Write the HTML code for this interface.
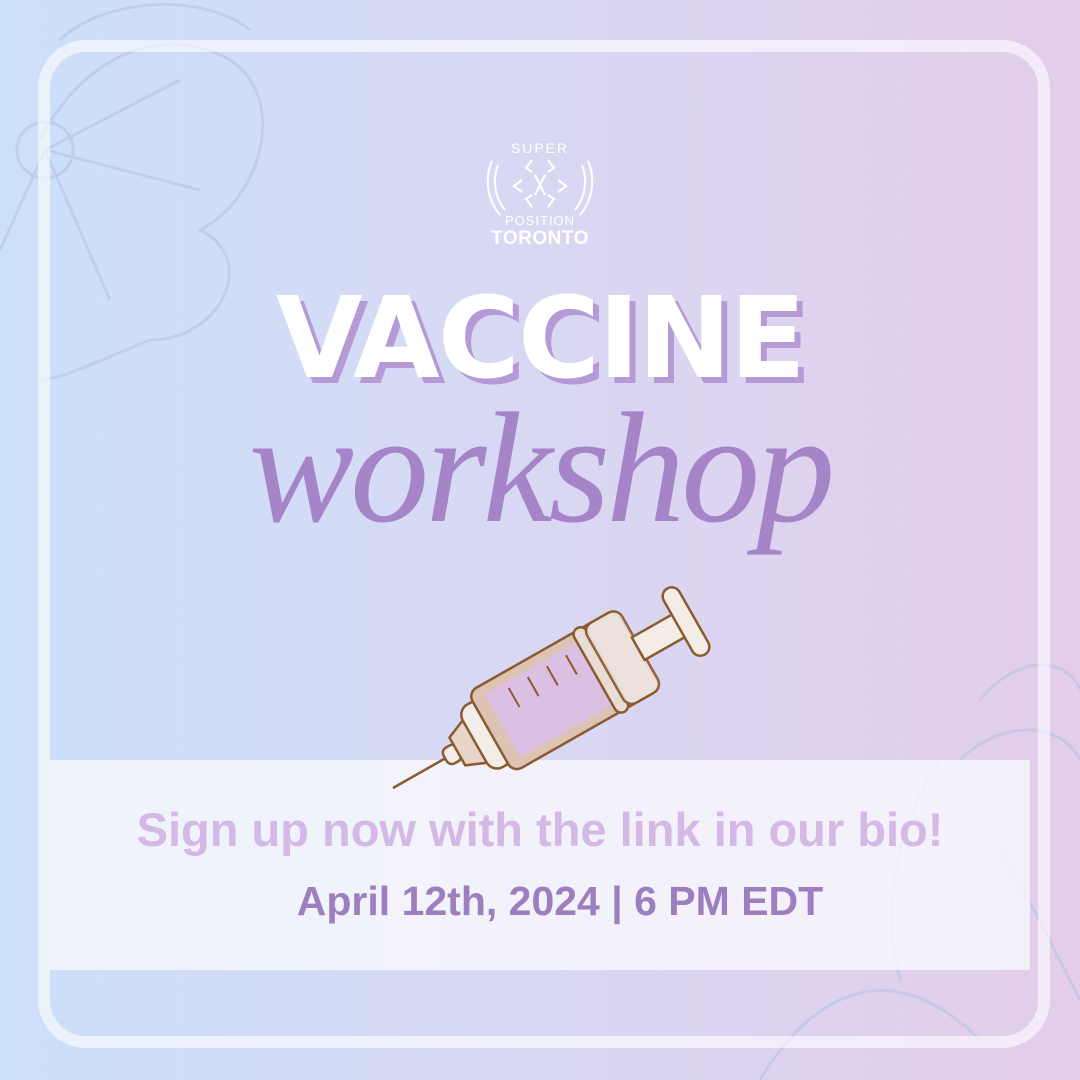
<!DOCTYPE html>
<html><head><meta charset="utf-8"><style>
html,body{margin:0;padding:0}
body{width:1080px;height:1080px;position:relative;overflow:hidden;background:linear-gradient(90deg,#cbe0f9 0%,#d7d9f4 45%,#e3cdea 100%);font-family:"Liberation Sans",sans-serif}
.band{position:absolute;left:50px;top:760px;width:980px;height:210px;background:rgba(248,248,252,0.82)}
.frame{position:absolute;left:38px;top:40px;width:988px;height:984px;border:12px solid rgba(255,255,255,0.6);border-radius:48px}
.t{position:absolute;left:0;width:1080px;text-align:center;font-weight:bold}
</style></head><body>
<svg width="1080" height="1080" style="position:absolute;left:0;top:0" fill="none" stroke="#b8c4e4" stroke-width="3" opacity="0.6">
<path d="M40 140 C80 60 160 20 230 60 C290 100 260 200 200 230 C260 260 220 340 150 340 C100 360 60 380 40 380"/>
<path d="M60 40 C100 0 200 -10 250 30"/>
<circle cx="45" cy="150" r="28"/>
<path d="M45 150 L180 80 M45 150 L200 190 M45 150 L110 300 M45 150 L0 250"/>
<path d="M980 700 C1020 650 1070 660 1080 690 M940 760 C900 820 880 900 900 980 M1000 850 C1030 900 1060 960 1080 1000 M760 1080 C820 980 900 960 980 1040"/>
<path d="M960 760 C1000 720 1060 720 1080 760"/>
</svg>
<div class="band"></div>
<div class="frame"></div>
<svg width="120" height="120" style="position:absolute;left:480px;top:125px" fill="none" stroke="#fff" stroke-width="2">
<path d="M18 40 A45 45 0 0 0 25 85 M12 36 A52 52 0 0 0 20 90 M102 40 A45 45 0 0 1 95 85 M108 36 A52 52 0 0 1 100 90"/>
<g stroke-width="2.2"><path d="M52 35 l-6 8 6 4 M68 35 l6 8 -6 4 M42 55 l-8 6 8 6 M78 55 l8 6 -8 6 M52 82 l-6 -8 6 -4 M68 82 l6 -8 -6 -4 M55 50 l10 20 M65 50 l-10 20"/></g>
<text x="60" y="28" text-anchor="middle" fill="#fff" stroke="none" font-size="14" font-family="Liberation Sans" letter-spacing="2">SUPER</text>
<text x="60" y="100" text-anchor="middle" fill="#fff" stroke="none" font-size="13" font-family="Liberation Sans" letter-spacing="1">POSITION</text>
</svg>
<div class="t" style="top:228px;font-size:19px;color:#fff;letter-spacing:0.5px">TORONTO</div>
<div class="t" style="top:280px;font-size:112px;color:#b69ad6;left:6px;letter-spacing:-2px;font-family:'DejaVu Sans',sans-serif">VACCINE</div>
<div class="t" style="top:274px;font-size:112px;color:#fff;letter-spacing:-2px;font-family:'DejaVu Sans',sans-serif">VACCINE</div>
<div class="t" style="top:378px;font-size:158px;color:#a585c7;font-weight:normal;font-style:italic;font-family:'Liberation Serif',serif;letter-spacing:-4px">workshop</div>
<svg width="1080" height="1080" style="position:absolute;left:0;top:0">
<g transform="translate(393 788) rotate(-29.6)" stroke="#8a5a30" stroke-width="2.5" stroke-linejoin="round">
<line x1="0" y1="0" x2="62" y2="0"/>
<rect x="60" y="-9" width="16" height="18" rx="6" fill="#f4ece6"/>
<path d="M74 -16 L98 -26 L98 26 L74 16 Z" fill="#e7d6c8"/>
<rect x="94" y="-36" width="26" height="72" rx="12" fill="#f4ece6"/>
<rect x="112" y="-46" width="170" height="92" rx="10" fill="#dcc3b3"/>
<rect x="126" y="-36" width="108" height="72" fill="#dcc0e4" stroke="none"/>
<path d="M150 -30 v22 M172 -30 v22 M194 -30 v22 M216 -30 v22 M236 -30 v22" stroke-width="2"/>
<rect x="232" y="-48" width="14" height="96" rx="7" fill="#e8dcd4"/>
<rect x="244" y="-46" width="40" height="92" rx="10" fill="#efe6e0" opacity="0.9"/>
<rect x="282" y="-13" width="50" height="26" fill="#f4ece6"/>
<rect x="328" y="-38" width="18" height="76" rx="9" fill="#f4ece6"/>
</g>
</svg>
<div class="t" style="top:802px;font-size:47px;color:#d4b8e6">Sign up now with the link in our bio!</div>
<div class="t" style="top:878px;left:20px;font-size:41px;color:#9d7fc0">April 12th, 2024 | 6 PM EDT</div>
</body></html>
